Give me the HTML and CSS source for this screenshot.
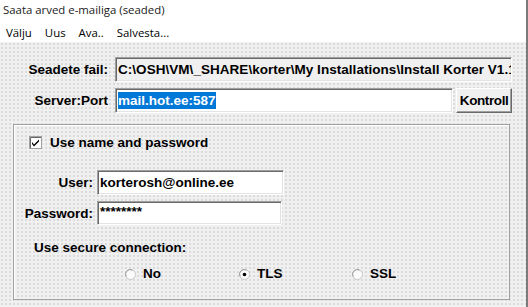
FILE: index.html
```html
<!DOCTYPE html>
<html lang="et">
<head>
    <meta charset="UTF-8">
    <title>Saata arved e-mailiga (seaded)</title>
    <link rel="stylesheet" href="styles.css">
</head>
<body>
    <div class="window">
        <div class="titlebar">Saata arved e-mailiga (seaded)</div>
        <div class="menubar">
            <span class="menu-item">Välju</span>
            <span class="menu-item">Uus</span>
            <span class="menu-item">Ava..</span>
            <span class="menu-item">Salvesta...</span>
        </div>

        <div class="panel">
            <div class="form">
                <label class="label">Seadete fail:</label>
                <div class="field field-readonly">C:\OSH\VM\_SHARE\korter\My Installations\Install Korter V1.1</div>

                <label class="label">Server:Port</label>
                <div class="server-row">
                    <div class="field field-server"><span class="selected">mail.hot.ee:587</span></div>
                    <button class="btn">Kontroll</button>
                </div>
            </div>

            <div class="group">
                <div class="check-row">
                    <svg class="checkbox" width="13" height="13" viewBox="0 0 13 13">
                        <rect x="0.5" y="0.5" width="12" height="12" fill="#fff" stroke="#a0a0a0"/>
                        <path d="M1.5 12 V1.5 H12" fill="none" stroke="#696969"/>
                        <path d="M3 6 L5 8.5 L10 3.5 L10 5.5 L5 10.5 L3 8 Z" fill="#000"/>
                    </svg>
                    <span class="check-text">Use name and password</span>
                </div>

                <div class="creds">
                    <label class="label">User:</label>
                    <div class="field field-user">korterosh@online.ee</div>
                    <label class="label">Password:</label>
                    <div class="field field-pass">********</div>
                </div>

                <div class="secure-title">Use secure connection:</div>

                <div class="radios">
                    <div class="radio">
                        <svg width="11" height="11" viewBox="0 0 11 11">
                            <circle cx="5.5" cy="5.5" r="5" fill="#fbfbfb" stroke="#c8c8c8"/>
                            <path d="M1.2 7.5 A4.6 4.6 0 0 1 7.5 1.2" fill="none" stroke="#9a9a9a"/>
                        </svg>
                        <span>No</span>
                    </div>
                    <div class="radio">
                        <svg width="11" height="11" viewBox="0 0 11 11">
                            <circle cx="5.5" cy="5.5" r="5" fill="#fbfbfb" stroke="#c8c8c8"/>
                            <path d="M1.2 7.5 A4.6 4.6 0 0 1 7.5 1.2" fill="none" stroke="#9a9a9a"/>
                            <circle cx="5.5" cy="5.5" r="1.8" fill="#000"/>
                        </svg>
                        <span>TLS</span>
                    </div>
                    <div class="radio">
                        <svg width="11" height="11" viewBox="0 0 11 11">
                            <circle cx="5.5" cy="5.5" r="5" fill="#fbfbfb" stroke="#c8c8c8"/>
                            <path d="M1.2 7.5 A4.6 4.6 0 0 1 7.5 1.2" fill="none" stroke="#9a9a9a"/>
                        </svg>
                        <span>SSL</span>
                    </div>
                </div>
            </div>
        </div>
    </div>
</body>
</html>
```

FILE: styles.css
```css
body {
    margin: 0;
    padding: 0;
    background: #f0f0f0;
    font-family: "Liberation Sans", Arial, sans-serif;
    color: #000;
    overflow: hidden;
}
.window {
    width: 526px;
    height: 307px;
    border-right: 2px solid #7a7a7a;
    display: flex;
    flex-direction: column;
}
.titlebar {
    height: 21px;
    line-height: 20px;
    padding-left: 3px;
    background: #fff;
    font-family: "Open Sans", "Noto Sans", sans-serif;
    font-size: 11.4px;
    color: #1a1a1a;
}
.menubar {
    height: 21px;
    line-height: 24px;
    background: #fff;
    display: flex;
    gap: 13px;
    padding-left: 6px;
    font-family: "Open Sans", "Noto Sans", sans-serif;
    font-size: 11.4px;
}
.panel {
    flex: 1;
    background-color: #f0f0f0;
    background-image: radial-gradient(circle, #dadada 0.7px, transparent 0.9px);
    background-size: 4px 4px;
}

/* top rows */
.form {
    display: grid;
    grid-template-columns: 108px 397px;
    column-gap: 7px;
    row-gap: 6px;
    padding-top: 15px;
}
.label {
    font-weight: bold;
    font-size: 13.5px;
    text-align: right;
    align-self: center;
    white-space: nowrap;
}
.field {
    box-sizing: border-box;
    height: 25px;
    background: #fff;
    border-top: 1px solid #a0a0a0;
    border-left: 1px solid #a0a0a0;
    border-bottom: 1px solid #fff;
    border-right: 1px solid #fff;
    box-shadow: inset 1px 1px #696969, inset -1px -1px #e3e3e3;
    padding: 0 2px;
    font-weight: bold;
    font-size: 13.5px;
    line-height: 23px;
    white-space: nowrap;
    overflow: hidden;
}
.field-readonly {
    background: #f0f0f0;
    letter-spacing: 0.04px;
}
.server-row {
    display: flex;
    gap: 3px;
}
.field-server {
    width: 339px;
}
.selected {
    background: #0078d7;
    color: #fff;
    padding: 1px 0;
}
.btn {
    box-sizing: border-box;
    width: 56px;
    height: 25px;
    padding: 0;
    background: #f0f0f0;
    border-top: 1px solid #fff;
    border-left: 1px solid #fff;
    border-bottom: 1px solid #696969;
    border-right: 1px solid #696969;
    box-shadow: inset -1px -1px #a0a0a0;
    font-family: "Liberation Sans", Arial, sans-serif;
    font-weight: bold;
    font-size: 13.5px;
    letter-spacing: -0.4px;
    color: #000;
}

/* group box */
.group {
    box-sizing: border-box;
    width: 497px;
    height: 176px;
    margin: 11px 0 0 13px;
    border: 1px solid #a0a0a0;
    box-shadow: inset 1px 1px #fff;
}
.check-row {
    display: flex;
    align-items: center;
    gap: 8px;
    margin: 11px 0 0 15px;
    height: 13px;
}
.checkbox {
    display: block;
}
.check-text {
    font-weight: bold;
    font-size: 13.5px;
}
.creds {
    display: grid;
    grid-template-columns: 79px auto;
    column-gap: 4px;
    row-gap: 6px;
    margin-top: 21px;
    justify-content: start;
}
.field-user {
    width: 187px;
}
.field-pass {
    width: 185px;
    height: 24px;
    line-height: 20px;
}
.secure-title {
    font-weight: bold;
    font-size: 13.5px;
    margin: 15px 0 0 20px;
    line-height: 16px;
}
.radios {
    display: grid;
    grid-template-columns: 114px 113px 113px;
    margin: 10px 0 0 111px;
    line-height: 16px;
}
.radio {
    display: flex;
    align-items: center;
    gap: 7px;
    font-weight: bold;
    font-size: 13.5px;
}
.radio svg {
    display: block;
}
```
